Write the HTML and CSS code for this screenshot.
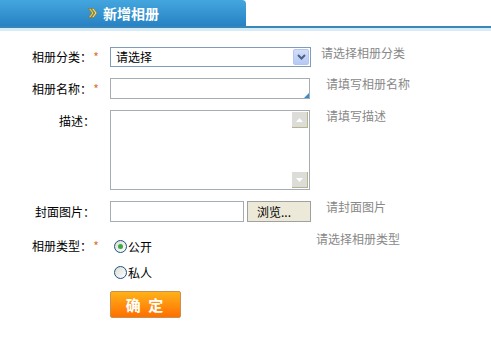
FILE: index.html
```html
<!DOCTYPE html>
<html lang="zh-CN">
<head>
    <meta charset="UTF-8">
    <meta name="viewport" content="width=device-width, initial-scale=1.0">
    <title>新增相册</title>
    <link rel="stylesheet" href="styles.css">
</head>
<body>
    <div class="tab-bar">
        <div class="tab">
            <svg class="tab-icon" width="9" height="10" viewBox="0 0 9 10">
                <path d="M0.5 0.5 L4 5 L0.5 9.5 L2.5 9.5 L6 5 L2.5 0.5 Z" fill="#f7d34a" stroke="#8a6a10" stroke-width="0.6"/>
                <path d="M3.5 0.5 L7 5 L3.5 9.5 L5.5 9.5 L9 5 L5.5 0.5 Z" fill="#ffe88a" stroke="#8a6a10" stroke-width="0.6"/>
            </svg>
            <span>新增相册</span>
        </div>
    </div>

    <form class="album-form">
        <div class="form-row row-category">
            <label class="label">相册分类：<em>*</em></label>
            <div class="field">
                <div class="select">
                    <span>请选择</span>
                    <span class="select-arrow">
                        <svg width="9" height="6" viewBox="0 0 9 6"><path d="M1 1 L4.5 4.5 L8 1" fill="none" stroke="#4d6185" stroke-width="2"/></svg>
                    </span>
                </div>
            </div>
            <span class="hint hint-near">请选择相册分类</span>
        </div>

        <div class="form-row row-name">
            <label class="label">相册名称：<em>*</em></label>
            <div class="field">
                <div class="text-box">
                    <input type="text" class="input">
                    <span class="corner"></span>
                </div>
            </div>
            <span class="hint">请填写相册名称</span>
        </div>

        <div class="form-row row-desc">
            <label class="label label-top plain">描述：</label>
            <div class="field">
                <div class="area-box">
                    <textarea class="area"></textarea>
                    <span class="scroll-btn scroll-up">
                        <svg width="7" height="4" viewBox="0 0 7 4"><path d="M0 4 L3.5 0 L7 4 Z" fill="#fff"/></svg>
                    </span>
                    <span class="scroll-btn scroll-down">
                        <svg width="7" height="4" viewBox="0 0 7 4"><path d="M0 0 L3.5 4 L7 0 Z" fill="#fff"/></svg>
                    </span>
                </div>
            </div>
            <span class="hint">请填写描述</span>
        </div>

        <div class="form-row row-cover">
            <label class="label plain">封面图片：</label>
            <div class="field file-field">
                <input type="text" class="input file-path">
                <span class="browse-btn">浏览...</span>
            </div>
            <span class="hint">请封面图片</span>
        </div>

        <div class="form-row row-type">
            <label class="label label-top">相册类型：<em>*</em></label>
            <div class="field radio-group">
                <label class="radio-item"><span class="radio checked"></span>公开</label>
                <label class="radio-item"><span class="radio"></span>私人</label>
            </div>
            <span class="hint hint-far">请选择相册类型</span>
        </div>

        <div class="form-row row-submit">
            <span class="label"></span>
            <button type="button" class="submit-btn">确 定</button>
        </div>
    </form>
</body>
</html>
```

FILE: styles.css
```css
* {
    margin: 0;
    padding: 0;
    box-sizing: border-box;
}

body {
    font-family: 'Noto Sans CJK SC', 'Liberation Sans', sans-serif;
    font-size: 12px;
    color: #000;
    background: #fff;
}

/* header tab */
.tab-bar {
    height: 31px;
    border-bottom: 3px solid #d6ecf8;
    position: relative;
}

.tab-bar::after {
    content: "";
    position: absolute;
    left: 0;
    right: 0;
    bottom: 0;
    height: 2px;
    background: #3b86b8;
}

.tab {
    width: 246px;
    height: 26px;
    margin-top: 0;
    border-radius: 0 4px 0 0;
    background: linear-gradient(#44a6de, #2782c3);
    display: flex;
    align-items: center;
    padding-left: 88px;
    color: #fff;
    font-weight: bold;
    font-size: 14px;
}

.tab-icon {
    margin-right: 6px;
}

/* form */
.album-form {
    padding-top: 16px;
    display: flex;
    flex-direction: column;
    gap: 11px;
}

.form-row {
    display: flex;
    align-items: center;
}

.label {
    width: 100px;
    margin-right: 10px;
    text-align: right;
    line-height: 14px;
    flex-shrink: 0;
}

.label em {
    font-style: normal;
    color: #e3701e;
    display: inline-block;
    width: 8px;
    text-align: center;
}

.label.plain {
    padding-right: 5px;
}

.label-top {
    align-self: flex-start;
    padding-top: 4px;
}

.field {
    width: 201px;
    flex-shrink: 0;
}

.hint {
    align-self: flex-start;
    margin-top: -1px;
    margin-left: 15px;
    line-height: 14px;
    color: #888;
}

.hint-near {
    margin-left: 10px;
}

.hint-far {
    margin-left: 5px;
}

/* select */
.select {
    height: 20px;
    border: 1px solid #7f9db9;
    position: relative;
    padding-left: 5px;
    line-height: 18px;
}

.select-arrow {
    position: absolute;
    right: 1px;
    top: 1px;
    width: 16px;
    height: 16px;
    border: 1px solid #b3c5f0;
    border-radius: 2px;
    background: linear-gradient(#d2def9, #b6c9f4);
    display: flex;
    align-items: center;
    justify-content: center;
}

/* text inputs */
.input {
    display: block;
    width: 200px;
    height: 21px;
    border: 1px solid #a5acb2;
    font: inherit;
    padding: 0 4px;
    outline: none;
}

.text-box {
    position: relative;
    width: 200px;
}

.corner {
    position: absolute;
    right: 1px;
    bottom: 1px;
    width: 0;
    height: 0;
    border-left: 5px solid transparent;
    border-bottom: 5px solid #3a8ccc;
}

.area-box {
    position: relative;
    width: 200px;
    height: 80px;
}

.area {
    display: block;
    width: 200px;
    height: 80px;
    border: 1px solid #a5acb2;
    resize: none;
    outline: none;
    font: inherit;
}

.scroll-btn {
    position: absolute;
    right: 2px;
    width: 16px;
    height: 16px;
    background: #dcdcd8;
    border-right: 1px solid #b8b48a;
    border-bottom: 1px solid #b8b48a;
    display: flex;
    align-items: center;
    justify-content: center;
}

.scroll-up {
    top: 2px;
}

.scroll-down {
    bottom: 2px;
}

.file-field {
    display: flex;
    gap: 3px;
}

.file-path {
    width: 134px;
}

.browse-btn {
    width: 64px;
    height: 21px;
    border: 1px solid #a0a0a0;
    background: #ece9d8;
    line-height: 19px;
    padding-left: 9px;
}

/* radios */
.radio-group {
    display: flex;
    flex-direction: column;
}

.radio-item {
    display: flex;
    align-items: center;
    height: 26px;
    padding-left: 4px;
}

.radio {
    width: 13px;
    height: 13px;
    border: 1px solid #1c5180;
    border-radius: 50%;
    background: linear-gradient(135deg, #dcdcd6, #fff);
    margin-right: 1px;
    position: relative;
}

.radio.checked::after {
    content: "";
    position: absolute;
    left: 3px;
    top: 3px;
    width: 5px;
    height: 5px;
    border-radius: 50%;
    background: #3fa83f;
}

.label-top + .radio-group {
    margin-top: 0;
}

.row-type .label-top {
    padding-top: 6px;
}

/* submit */
.row-submit {
    margin-top: -5px;
}

.submit-btn {
    width: 71px;
    height: 27px;
    border: 1px solid #c99050;
    border-radius: 2px;
    background: linear-gradient(#ffb21a, #ff6f00);
    color: #fff;
    font: bold 15px 'Noto Sans CJK SC', sans-serif;
    letter-spacing: 2px;
    cursor: pointer;
}
```
